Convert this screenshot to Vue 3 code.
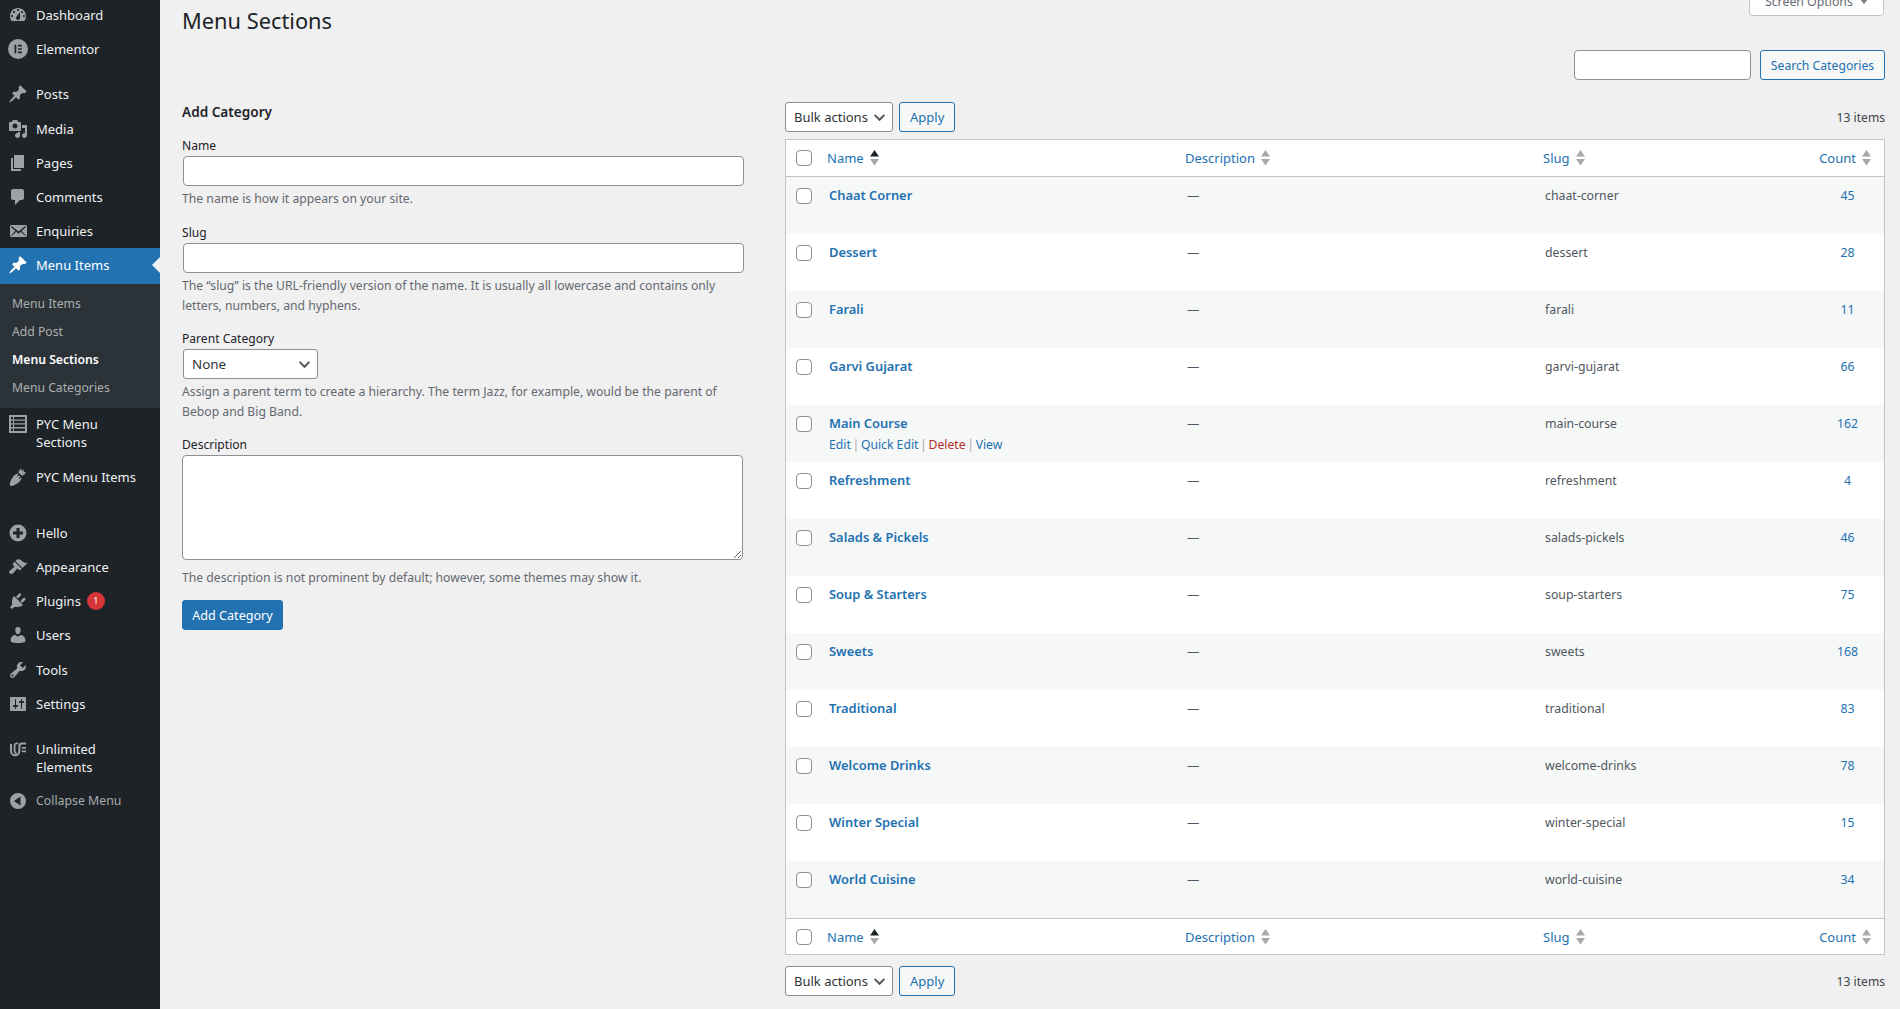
<template>
  <div class="page">
    <aside class="sidebar">
      <ul class="menu">
        <li v-for="item in menu" :key="item.label" :class="['menu-item', { current: item.current, sep: item.sep, 'sep-wide': item.wide, nudge: item.nudge }]">
          <div class="menu-link">
            <svg class="menu-icon" viewBox="0 0 20 20"><path :d="icons[item.icon]" fill-rule="evenodd" /></svg>
            <span class="menu-label" :class="{ dim: item.dim }">
              <template v-for="(line, i) in item.label.split('|')" :key="i"><br v-if="i" />{{ line }}</template>
              <span v-if="item.badge" class="badge">{{ item.badge }}</span>
            </span>
          </div>
          <ul v-if="item.current" class="submenu">
            <li v-for="sub in submenu" :key="sub" :class="{ active: sub === 'Menu Sections' }">{{ sub }}</li>
          </ul>
        </li>
      </ul>
    </aside>

    <main class="content">
      <div class="screen-options">Screen Options <span class="tab-arrow"></span></div>
      <h1>Menu Sections</h1>
      <div class="search-box">
        <input type="text" class="search-input" />
        <button class="btn search-btn">Search Categories</button>
      </div>

      <div class="columns">
        <section class="col-left">
          <h2>Add Category</h2>
          <label class="with-gap">Name</label>
          <input type="text" class="text-input" />
          <p class="hint">The name is how it appears on your site.</p>
          <label class="with-gap">Slug</label>
          <input type="text" class="text-input" />
          <p class="hint">The “slug” is the URL-friendly version of the name. It is usually all lowercase and contains only letters, numbers, and hyphens.</p>
          <label>Parent Category</label>
          <div class="select parent-select">
            <select><option>None</option></select>
            <svg class="chevron" viewBox="0 0 20 20"><path d="M3.500 6.500l6.500 6.500 6.500-6.500" /></svg>
          </div>
          <p class="hint">Assign a parent term to create a hierarchy. The term Jazz, for example, would be the parent of Bebop and Big Band.</p>
          <label>Description</label>
          <textarea></textarea>
          <p class="hint hint-desc">The description is not prominent by default; however, some themes may show it.</p>
          <button class="btn-primary">Add Category</button>
        </section>

        <section class="col-right">
          <div class="toolbar">
            <div class="select bulk-select">
              <select><option>Bulk actions</option></select>
              <svg class="chevron" viewBox="0 0 20 20"><path d="M3.500 6.500l6.500 6.500 6.500-6.500" /></svg>
            </div>
            <button class="btn">Apply</button>
            <span class="count-text">13 items</span>
          </div>

          <table>
            <colgroup>
              <col style="width: 35px" />
              <col style="width: 358px" />
              <col style="width: 358px" />
              <col style="width: 274px" />
              <col />
            </colgroup>
            <thead>
              <tr>
                <th class="cell-check"><input type="checkbox" /></th>
                <th v-for="col in columns" :key="col" :class="{ 'th-count': col === 'Count' }">
                  <span class="th-link">{{ col }}
                    <svg class="sort" viewBox="0 0 9 16">
                      <path d="M4.500 0L9 6.500H0z" :fill="col === 'Name' ? '#1d2327' : '#a7aaad'" />
                      <path d="M0 9h9l-4.500 6.500z" fill="#a7aaad" />
                    </svg>
                  </span>
                </th>
              </tr>
            </thead>
            <tbody>
              <tr v-for="row in rows" :key="row.slug">
                <td class="cell-check"><input type="checkbox" /></td>
                <td class="cell-name">
                  <a class="row-title">{{ row.name }}</a>
                  <div v-if="row.actions" class="row-actions">
                    <a>Edit</a> <i>|</i> <a>Quick Edit</a> <i>|</i> <a class="del">Delete</a> <i>|</i> <a>View</a>
                  </div>
                </td>
                <td class="dash">—</td>
                <td class="slug">{{ row.slug }}</td>
                <td class="num">{{ row.count }}</td>
              </tr>
            </tbody>
            <tfoot>
              <tr>
                <th class="cell-check"><input type="checkbox" /></th>
                <th v-for="col in columns" :key="col" :class="{ 'th-count': col === 'Count' }">
                  <span class="th-link">{{ col }}
                    <svg class="sort" viewBox="0 0 9 16">
                      <path d="M4.500 0L9 6.500H0z" :fill="col === 'Name' ? '#1d2327' : '#a7aaad'" />
                      <path d="M0 9h9l-4.500 6.500z" fill="#a7aaad" />
                    </svg>
                  </span>
                </th>
              </tr>
            </tfoot>
          </table>

          <div class="toolbar toolbar-bottom">
            <div class="select bulk-select">
              <select><option>Bulk actions</option></select>
              <svg class="chevron" viewBox="0 0 20 20"><path d="M3.500 6.500l6.500 6.500 6.500-6.500" /></svg>
            </div>
            <button class="btn">Apply</button>
            <span class="count-text">13 items</span>
          </div>
        </section>
      </div>
    </main>
  </div>
</template>

<script setup>
const icons = {
  dashboard: 'M3.76 16h12.48c1.1-1.37 1.76-3.11 1.76-5 0-4.42-3.58-8-8-8s-8 3.58-8 8c0 1.89.66 3.63 1.76 5zM10 4c.55 0 1 .45 1 1s-.45 1-1 1-1-.45-1-1 .45-1 1-1zM6 6c.55 0 1 .45 1 1s-.45 1-1 1-1-.45-1-1 .45-1 1-1zm8 0c.55 0 1 .45 1 1s-.45 1-1 1-1-.45-1-1 .45-1 1-1zm-5.37 5.55L12 7v6c0 1.1-.9 2-2 2s-2-.9-2-2c0-.57.24-1.08.63-1.45zM4 10c.55 0 1 .45 1 1s-.45 1-1 1-1-.45-1-1 .45-1 1-1zm12 0c.55 0 1 .45 1 1s-.45 1-1 1-1-.45-1-1 .45-1 1-1z',
  elementor: 'M10 0a10 10 0 1 0 0 20 10 10 0 0 0 0-20zM6.500 5.800h1.800v8.400H6.500zM10 5.800h3.800v1.700H10zM10 9.150h3.800v1.700H10zM10 12.500h3.800v1.700H10z',
  pin: 'M10.44 3.02l1.82-1.82 6.36 6.35-1.83 1.82c-1.05-.68-2.48-.57-3.41.36l-.75.75c-.92.93-1.04 2.35-.35 3.41l-1.83 1.82-2.41-2.41-2.8 2.79c-.42.42-3.38 2.71-3.8 2.29s1.86-3.39 2.28-3.81l2.79-2.79L4.1 9.36l1.83-1.82c1.05.69 2.48.57 3.4-.36l.75-.75c.93-.92 1.05-2.35.36-3.41z',
  media: 'M13 11V4c0-.55-.45-1-1-1h-1.67L9 1H5L3.67 3H2c-.55 0-1 .45-1 1v7c0 .55.45 1 1 1h10c.55 0 1-.45 1-1zM7 4.5c1.38 0 2.5 1.12 2.5 2.5S8.38 9.5 7 9.5 4.5 8.38 4.5 7 5.62 4.5 7 4.5zM14 6h5v10.5c0 1.38-1.12 2.5-2.5 2.5S14 17.88 14 16.5s1.12-2.5 2.5-2.5c.17 0 .34.02.5.05V9h-3V6zm-4 8.05V13h2v3.5c0 1.38-1.12 2.5-2.5 2.5S7 17.88 7 16.5 8.12 14 9.5 14c.17 0 .34.02.5.05z',
  pages: 'M6 15V2h10v13H6zm-1 1h8v2H3V5h2v11z',
  comments: 'M5 2h9c1.1 0 2 .9 2 2v7c0 1.1-.9 2-2 2h-2l-5 5v-5H5c-1.1 0-2-.9-2-2V4c0-1.1.9-2 2-2z',
  email: 'M19 14.5v-9c0-.83-.67-1.5-1.5-1.5H3.49c-.83 0-1.5.67-1.5 1.5v9c0 .83.67 1.5 1.5 1.5H17.5c.83 0 1.5-.67 1.5-1.5zm-1.31-9.11c.33.33.15.67-.03.84L13.6 9.95l3.9 4.06c.12.14.2.36.06.51-.13.16-.43.15-.56.05l-4.37-3.73-2.14 1.95-2.13-1.95-4.37 3.73c-.13.1-.43.11-.56-.05-.14-.15-.06-.37.06-.51l3.9-4.06-4.06-3.72c-.18-.17-.36-.51-.03-.84s.67-.17.95.07l6.24 5.04 6.25-5.04c.28-.24.62-.4.95-.07z',
  list: 'M1 1h18v18H1zM3 3v2.500h2V3zM6 3v2.500h11V3zM3 6.800v2.500h2V6.800zM6 6.800v2.500h11V6.800zM3 10.600v2.500h2v-2.500zM6 10.600v2.500h11v-2.500zM3 14.400V17h2v-2.600zM6 14.400V17h11v-2.600z',
  carrot: 'M2.200 18.500c-1.300-1 .6-6.800 4.300-10.200.8-.7 1.700-1.400 2.700-1.700l1.200 1.200-1.300 1.300.7.700 1.400-1.400 1.200 1.200-1.600 1.600.7.700 1.500-1.500.6.700c-.2 1.300-1.100 2.500-2.200 3.600-3.300 3.100-7.800 4.800-8.900 4zM10.500 5.800l.3-2.600 1.200.9.300-3 1.700 2.700 2-1.500-.6 2.900 2.900-.3-1.900 2.500-2.300 1.400z',
  plus: 'M10 1.500a8.500 8.500 0 1 0 0 17 8.500 8.500 0 0 0 0-17zM8.500 5h3v3.500H15v3h-3.500V15h-3v-3.500H5v-3h3.500z',
  appearance: 'M14.48 11.06L7.41 3.99l1.5-1.5c.5-.56 2.3-.47 3.51.32 1.21.8 1.43 1.28 2.91 2.1 1.18.64 2.45 1.26 4.45.85zm-.71.71L6.7 4.7 4.93 6.47c-.39.39-.39 1.02 0 1.41l1.06 1.06c.39.39.39 1.03 0 1.42-.6.6-1.43 1.11-2.21 1.69-.35.26-.7.53-1.01.84C1.43 13.23.4 14.98 1.72 16.3c1.33 1.32 3.07.29 4.43-1.07.31-.31.58-.66.84-1.01.58-.78 1.09-1.61 1.69-2.21.39-.39 1.03-.39 1.42 0l1.06 1.06c.39.39 1.02.39 1.41 0z',
  plugins: 'M13.11 4.36L9.87 7.6 8 5.73l3.24-3.24c.35-.34 1.05-.2 1.56.32.52.51.66 1.21.31 1.55zm-8 1.77l.91-1.12 9.01 9.01-1.19.84c-.71.71-2.63 1.16-3.82 1.16H6.14L4.9 17.26c-.59.59-1.54.59-2.12 0-.59-.58-.59-1.53 0-2.12l1.24-1.24v-3.88c0-1.13.4-3.19 1.09-3.89zm7.26 3.97l3.24-3.24c.34-.35 1.04-.21 1.55.31.52.51.66 1.21.31 1.55l-3.24 3.25z',
  users: 'M10 9.25c-2.27 0-2.73-3.44-2.73-3.44C7 4.02 7.82 2 9.97 2c2.16 0 2.98 2.02 2.71 3.81 0 0-.41 3.44-2.68 3.44zm0 2.57L12.72 10c2.39 0 4.52 2.33 4.52 4.53v2.49s-3.65 1.13-7.24 1.13c-3.65 0-7.24-1.13-7.24-1.13v-2.49c0-2.25 1.94-4.48 4.47-4.48z',
  tools: 'M16.68 9.77c-1.34 1.34-3.3 1.67-4.95.99l-5.41 6.52c-.99.99-2.59.99-3.58 0s-.99-2.59 0-3.57l6.52-5.42c-.68-1.65-.35-3.61.99-4.95 1.28-1.28 3.12-1.62 4.72-1.06l-2.89 2.89 2.82 2.82 2.86-2.87c.53 1.58.18 3.39-1.08 4.65zM3.81 16.21c.4.39 1.04.39 1.43 0 .4-.4.4-1.04 0-1.43-.39-.4-1.03-.4-1.43 0-.39.39-.39 1.03 0 1.43z',
  settings: 'M18 16V4c0-.55-.45-1-1-1H3c-.55 0-1 .45-1 1v12c0 .55.45 1 1 1h14c.55 0 1-.45 1-1zM8 11h1c.55 0 1 .45 1 1s-.45 1-1 1H8v1.5c0 .28-.22.5-.5.5s-.5-.22-.5-.5V13H6c-.55 0-1-.45-1-1s.45-1 1-1h1V5.5c0-.28.22-.5.5-.5s.5.22.5.5V11zm5-2h-1c-.55 0-1-.45-1-1s.45-1 1-1h1V5.5c0-.28.22-.5.5-.5s.5.22.5.5V7h1c.55 0 1 .45 1 1s-.45 1-1 1h-1v5.5c0 .28-.22.5-.5.5s-.5-.22-.5-.5V9z',
  unlimited: 'M2 5h2v7a3.200 3.200 0 0 0 6.400 0V7a3.500 3.500 0 0 1 3.500-3.500H18v2h-4.100a1.500 1.500 0 0 0-1.500 1.500v5a5.200 5.200 0 0 1-10.400 0zM5.700 6a3 3 0 0 1 3-2.500h1.500v1.800H8.700c-.8 0-1.200.5-1.200 1.200V12c0 .7.5 1.300 1.100 1.300v1.700c-1.700 0-2.900-1.300-2.900-3zM13.800 8H18v1.800h-4.200zM13.800 11.500H18v1.800h-4.200z',
  collapse: 'M10 2a8 8 0 1 0 0 16 8 8 0 0 0 0-16zM12.500 5.500v9L6 10z'
}

const menu = [
  { label: 'Dashboard', icon: 'dashboard' },
  { label: 'Elementor', icon: 'elementor' },
  { label: 'Posts', icon: 'pin', sep: true },
  { label: 'Media', icon: 'media' },
  { label: 'Pages', icon: 'pages' },
  { label: 'Comments', icon: 'comments' },
  { label: 'Enquiries', icon: 'email' },
  { label: 'Menu Items', icon: 'pin', current: true },
  { label: 'PYC Menu|Sections', icon: 'list', nudge: true },
  { label: 'PYC Menu Items', icon: 'carrot' },
  { label: 'Hello', icon: 'plus', wide: true },
  { label: 'Appearance', icon: 'appearance' },
  { label: 'Plugins', icon: 'plugins', badge: 1 },
  { label: 'Users', icon: 'users' },
  { label: 'Tools', icon: 'tools' },
  { label: 'Settings', icon: 'settings' },
  { label: 'Unlimited|Elements', icon: 'unlimited', sep: true },
  { label: 'Collapse Menu', icon: 'collapse', dim: true }
]

const submenu = ['Menu Items', 'Add Post', 'Menu Sections', 'Menu Categories']
const columns = ['Name', 'Description', 'Slug', 'Count']

const rows = [
  { name: 'Chaat Corner', slug: 'chaat-corner', count: 45 },
  { name: 'Dessert', slug: 'dessert', count: 28 },
  { name: 'Farali', slug: 'farali', count: 11 },
  { name: 'Garvi Gujarat', slug: 'garvi-gujarat', count: 66 },
  { name: 'Main Course', slug: 'main-course', count: 162, actions: true },
  { name: 'Refreshment', slug: 'refreshment', count: 4 },
  { name: 'Salads & Pickels', slug: 'salads-pickels', count: 46 },
  { name: 'Soup & Starters', slug: 'soup-starters', count: 75 },
  { name: 'Sweets', slug: 'sweets', count: 168 },
  { name: 'Traditional', slug: 'traditional', count: 83 },
  { name: 'Welcome Drinks', slug: 'welcome-drinks', count: 78 },
  { name: 'Winter Special', slug: 'winter-special', count: 15 },
  { name: 'World Cuisine', slug: 'world-cuisine', count: 34 }
]
</script>

<style>
html, body { margin: 0; background: #f0f0f1; }
</style>

<style scoped>
.page {
  display: flex; height: 1009px; overflow: hidden; background: #f0f0f1;
  font-family: "Noto Sans", "Open Sans", sans-serif; font-size: 13px; color: #3c434a;
}
ul { list-style: none; margin: 0; padding: 0; }

.sidebar { width: 160px; flex: none; background: #1d2327; color: #f0f0f1; }
.menu { margin-top: -2px; }
.menu-item.sep { margin-top: 11px; }
.menu-item.sep-wide { margin-top: 22px; }
.menu-link { display: flex; padding: 8px 0 8.2px; position: relative; line-height: 18px; }
.nudge .menu-link { padding: 7px 0 9.2px; }
.menu-icon { width: 20px; height: 20px; margin: -1px 8px -1px 8px; flex: none; fill: #9ca1a6; }
.menu-label { font-size: 13px; }
.menu-label.dim { color: #a7aaad; font-size: 12.3px; }
.current .menu-link { background: #2271b1; color: #fff; height: 19px; }
.current .menu-icon { fill: #fff; }
.current .menu-link::after {
  content: ""; position: absolute; right: 0; top: 9px;
  border: 8px solid transparent; border-right-color: #f0f0f1; border-left: 0;
}
.badge {
  display: inline-block; width: 18px; height: 18px; border-radius: 9px; background: #d63638; color: #fff;
  font-size: 9px; line-height: 18px; text-align: center; margin-left: 6px; vertical-align: top;
}
.submenu { background: #2c3338; padding: 6px 0; }
.submenu li { height: 28px; line-height: 28px; padding-left: 12px; color: #abaeb0; font-size: 12.2px; }
.submenu li.active { color: #fff; font-weight: 600; }

.content { flex: 1; padding: 0 15px 0 22px; position: relative; min-width: 0; }
.screen-options {
  position: absolute; top: -12px; right: 16px; width: 135px; height: 28px; box-sizing: border-box; line-height: 26px;
  text-align: center; background: #fff; border: 1px solid #c3c4c7; border-radius: 0 0 4px 4px; color: #646970; font-size: 12.3px;
}
.tab-arrow {
  display: inline-block; margin-left: 4px; vertical-align: 2px;
  border: 4px solid transparent; border-top: 5px solid #787c82; border-bottom: 0;
}
h1 { font-size: 21.8px; font-weight: 400; line-height: 30px; margin: 6px 0 0; color: #1d2327; }
.search-box { display: flex; justify-content: flex-end; gap: 9px; margin-top: 14px; }
.search-input { width: 177px; }

input[type="text"], textarea {
  box-sizing: border-box; background: #fff; border: 1px solid #8c8f94; border-radius: 4px;
  padding: 0 8px; font: inherit; display: block;
}
.search-input { height: 30px; margin: 0; }
.text-input { height: 30px; width: 561px; margin: 0 0 0 1px; }
.btn {
  height: 30px; box-sizing: border-box; padding: 0 10px; background: #f6f7f7; border: 1px solid #2271b1; border-radius: 3px;
  color: #2271b1; font: inherit; white-space: nowrap;
}
.search-btn { width: 125px; padding: 0; font-size: 12.2px; }

.columns { display: flex; padding-top: 22px; }
.col-left { width: 563px; flex: none; margin-right: 40px; }
.col-right { flex: 1; min-width: 0; }

h2 { font-size: 13.6px; font-weight: 600; line-height: 20px; margin: 0 0 13px; color: #1d2327; }
label { display: block; line-height: 20px; color: #1d2327; font-size: 12.1px; }
label.with-gap { padding-top: 1px; }
.hint { margin: 3px 0 13px; line-height: 20px; color: #646970; font-size: 12.2px; }
.hint-desc { margin: 8px 0 12px; }
textarea { width: 561px; height: 105px; resize: vertical; padding: 2px 6px; margin: 0; }

.select { position: relative; }
.select select {
  appearance: none; box-sizing: border-box; width: 100%; height: 30px; background: #fff; border: 1px solid #8c8f94; border-radius: 3px;
  padding: 0 24px 0 8px; font: inherit; font-size: 13.4px; color: #2c3338; display: block;
}
.chevron {
  position: absolute; right: 6px; top: 8px; width: 15px; height: 15px; pointer-events: none;
  fill: none; stroke: #50575e; stroke-width: 2.6;
}
.parent-select { width: 135px; margin-left: 1px; }
.bulk-select { width: 108px; }
.bulk-select select { font-size: 13px; }

.btn-primary {
  display: block; width: 101px; height: 30px; padding: 0; background: #2271b1; border: 1px solid #2271b1; border-radius: 3px;
  color: #fff; font: inherit; font-size: 12.6px;
}

.toolbar { display: flex; align-items: center; gap: 6px; }
.toolbar-bottom { margin-top: 11px; }
.count-text { margin-left: auto; color: #3c434a; font-size: 12.1px; }

table {
  table-layout: fixed; width: 100%; border-collapse: separate; border-spacing: 0; background: #fff;
  border: 1px solid #c3c4c7; margin-top: 7px;
}
th { height: 36px; padding: 0 0 0 6px; text-align: left; font-weight: 400; box-sizing: border-box; }
thead th { border-bottom: 1px solid #c3c4c7; height: 37px; padding-bottom: 1px; }
tfoot th { border-top: 1px solid #c3c4c7; height: 36px; }
th.th-count { text-align: right; padding-right: 13px; }
.th-link { color: #2271b1; display: inline-flex; align-items: center; gap: 6px; }
.sort { width: 9px; height: 16px; }

td { height: 57px; box-sizing: border-box; vertical-align: top; padding: 9px 8px 0; line-height: 20px; color: #50575e; font-size: 12.3px; }
tbody tr:nth-child(odd) { background: #f6f7f7; }
.cell-check { padding: 0 0 0 10px; vertical-align: middle; }
td.cell-check { vertical-align: top; padding-top: 11px; }
input[type="checkbox"] {
  appearance: none; width: 16px; height: 16px; margin: 0; display: block; background: #fff;
  border: 1px solid #8c8f94; border-radius: 4px; box-sizing: border-box;
}
td.cell-name { padding-top: 8px; }
.row-title { color: #2271b1; font-weight: 600; font-size: 12.9px; }
.row-actions { margin-top: 1px; color: #2271b1; font-size: 12.2px; }
.row-actions i { font-style: normal; color: #a7aaad; margin: 0 -1.5px; }
.del { color: #b32d2e; }
td.num { text-align: center; color: #2271b1; }
</style>
